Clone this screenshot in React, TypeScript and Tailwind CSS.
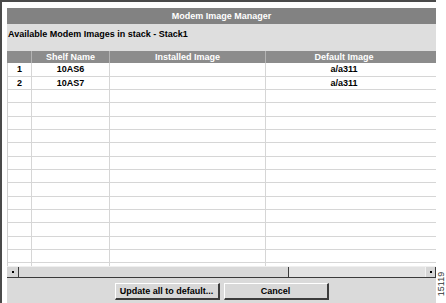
import React from "react";

const rowHeights = [14, 13, 13, 14, 13, 13, 14, 13, 13, 14, 13, 13, 14, 13, 13];
const data: { n: string; shelf: string; installed: string; def: string }[] = [
  { n: "1", shelf: "10AS6", installed: "", def: "a/a311" },
  { n: "2", shelf: "10AS7", installed: "", def: "a/a311" },
];

export default function App() {
  return (
    <div
      className="flex w-[446px] h-[303px] bg-white overflow-hidden"
      style={{ fontFamily: '"Liberation Sans", Arial, sans-serif' }}
    >
      <div className="flex flex-col w-[436px] h-[303px] border-l-2 border-t-2 border-[#4a4a4a] pl-[5px] pt-[6px]">
        {/* Title bar */}
        <div className="h-[16px] bg-[#828282] flex items-center justify-center text-white font-bold text-[9px] leading-none">
          Modem Image Manager
        </div>
        {/* Label area */}
        <div className="h-[27px] bg-[#dedede] text-black font-bold text-[9px] leading-none pt-[6px] pl-[1px]">
          Available Modem Images in stack - Stack1
        </div>
        {/* Table header */}
        <div className="h-[12px] bg-[#8c8c8c] flex text-white font-bold text-[9px] leading-none">
          <div className="w-[25px] border-r border-[#b4b4b4]" />
          <div className="w-[78px] border-r border-[#b4b4b4] flex items-center justify-center">Shelf Name</div>
          <div className="w-[156px] border-r border-[#b4b4b4] flex items-center justify-center">Installed Image</div>
          <div className="flex-1 flex items-center justify-center pr-[14px]">Default Image</div>
        </div>
        {/* Table body */}
        <div className="h-[203px] bg-white border-l border-[#d0d0d0] flex flex-col">
          {rowHeights.map((h, i) => {
            const r = data[i];
            return (
              <div
                key={i}
                className="flex border-b border-[#d6d6d6] text-black font-bold text-[9px] leading-none"
                style={{ height: h }}
              >
                <div className="w-[24px] border-r border-[#d6d6d6] flex items-center justify-center">{r?.n}</div>
                <div className="w-[78px] border-r border-[#d6d6d6] flex items-center justify-center">{r?.shelf}</div>
                <div className="w-[156px] border-r border-[#d6d6d6] flex items-center justify-center">{r?.installed}</div>
                <div className="flex-1 flex items-center justify-center pr-[14px]">{r?.def}</div>
              </div>
            );
          })}
          <div className="flex-1 flex">
            <div className="w-[24px] border-r border-[#d6d6d6]" />
            <div className="w-[78px] border-r border-[#d6d6d6]" />
            <div className="w-[156px] border-r border-[#d6d6d6]" />
          </div>
        </div>
        {/* Horizontal scrollbar */}
        <div className="h-[12px] flex bg-[#d6d6d6] border-b border-[#3a3a3a] border-t border-t-[#efefef]">
          <div className="w-[12px] border-r border-[#3a3a3a] flex items-center justify-center">
            <div className="w-[2px] h-[2px] bg-black" />
          </div>
          <div className="w-[270px] bg-[#d9d9d9] border-r border-[#3a3a3a]" />
          <div className="flex-1 bg-[#e2e2e2]" />
          <div className="w-[11px] border-r border-[#3a3a3a] border-l border-l-[#f2f2f2] flex items-center justify-center">
            <div className="w-[2px] h-[2px] bg-black" />
          </div>
        </div>
        {/* Buttons */}
        <div className="flex-1 bg-[#dadada] flex justify-center items-start pt-[5px] gap-[4px]">
          <button className="w-[105px] h-[17px] bg-[#d8d8d8] border-t border-l border-t-white border-l-white border-b-2 border-r-2 border-b-[#3c3c3c] border-r-[#3c3c3c] text-black font-bold text-[9px] leading-none flex items-center justify-center">
            Update all to default...
          </button>
          <button className="w-[105px] h-[17px] bg-[#d8d8d8] border-t border-l border-t-white border-l-white border-b-2 border-r-2 border-b-[#3c3c3c] border-r-[#3c3c3c] text-black font-bold text-[9px] leading-none flex items-center justify-center">
            Cancel
          </button>
        </div>
      </div>
      <div className="w-[10px] h-[303px] relative">
        <div className="absolute left-[-10px] top-[279px] w-[30px] h-[10px] -rotate-90 text-center text-[9px] leading-[10px] text-[#333]">
          15119
        </div>
      </div>
    </div>
  );
}
